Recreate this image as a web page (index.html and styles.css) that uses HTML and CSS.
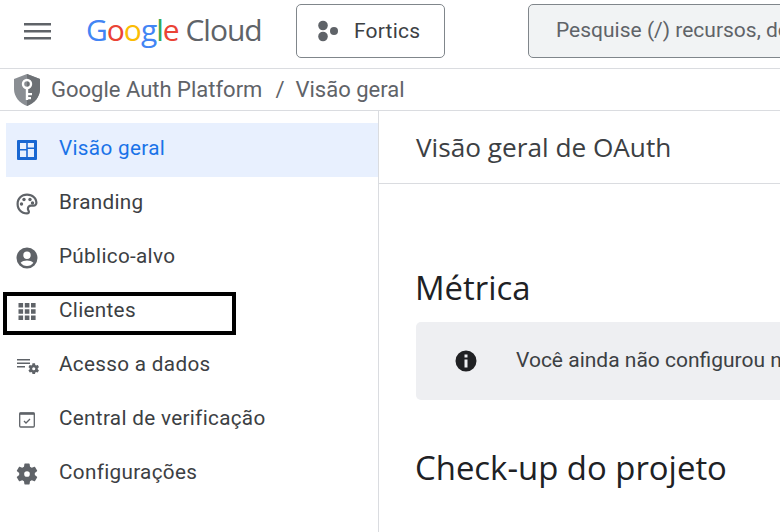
FILE: index.html
```html
<!DOCTYPE html>
<html lang="pt-BR">
<head>
    <meta charset="UTF-8">
    <meta name="viewport" content="width=device-width, initial-scale=1.0">
    <title>Google Auth Platform</title>
    <link rel="stylesheet" href="styles.css">
</head>
<body>
    <header class="topbar">
        <svg class="menu-icon" width="28" height="20" viewBox="0 0 28 20"><path d="M0 1h27v2.600H0zM0 8h27v2.600H0zM0 15h27v2.600H0z" fill="#5f6368"/></svg>
        <div class="logo"><span class="logo-google"><span class="c-blue">G</span><span class="c-red">o</span><span class="c-yellow">o</span><span class="c-blue">g</span><span class="c-green">l</span><span class="c-red">e</span></span> <span class="logo-cloud">Cloud</span></div>
        <button class="project-button">
            <svg width="22" height="24" viewBox="0 0 22 24"><circle cx="6" cy="6.500" r="4.800" fill="#5f6368"/><circle cx="6" cy="17.500" r="4.800" fill="#5f6368"/><circle cx="17" cy="12" r="4" fill="#5f6368"/></svg>
            Fortics
        </button>
        <div class="search-box">Pesquise (/) recursos, documentos</div>
    </header>

    <div class="breadcrumb">
        <svg class="shield" width="30" height="34" viewBox="0 0 30 34">
            <path d="M15 1L28 6v10c0 8-5.500 14-13 17C7.500 30 2 24 2 16V6z" fill="#8a8e93"/>
            <path d="M15 1L28 6v10c0 8-5.500 14-13 17z" fill="#6d7175"/>
            <circle cx="15" cy="11" r="4" fill="none" stroke="#fff" stroke-width="2.400"/>
            <path d="M13.800 14h2.400v13h-2.400zM16 20h4v2.200h-4zM16 24h3v2.200h-3z" fill="#fff"/>
        </svg>
        <span>Google Auth Platform</span>
        <span class="crumb-sep">/</span>
        <span>Visão geral</span>
    </div>

    <div class="layout">
        <nav class="sidebar">
            <a class="nav-item active">
                <svg width="24" height="24" viewBox="0 0 24 24"><path fill-rule="evenodd" d="M3 2h18a1 1 0 0 1 1 1v18a1 1 0 0 1-1 1H3a1 1 0 0 1-1-1V3a1 1 0 0 1 1-1zM5 5v6h6.200V5zm7.800 0v4.500H19V5zm0 6v8H19v-8zM5 12.600V19h6.200v-6.400z" fill="#1967d2"/></svg>
                Visão geral
            </a>
            <a class="nav-item">
                <svg width="24" height="24" viewBox="0 0 24 24"><path fill-rule="evenodd" d="M12 1.500C6 1.500 1.500 6 1.500 12S6 22.500 12 22.500c2 0 3-1.300 3-2.700 0-1.500-1-2-1-3.100 0-1.100.9-1.900 2-1.900h2.500c2.500 0 4-1.700 4-4C22.500 5.500 18 1.500 12 1.500zm0 2.200c4.800 0 8.300 3 8.300 7.100 0 1-.7 1.800-1.800 1.800H16c-2.400 0-4.200 1.800-4.200 4.100 0 1.500.9 2.400 1 3.200 0 .3-.3.4-.8.400-4.800 0-8.300-3.500-8.300-8.300S7.200 3.700 12 3.700z" fill="#5f6368"/><circle cx="6.500" cy="12" r="1.700" fill="#5f6368"/><circle cx="9" cy="7.500" r="1.700" fill="#5f6368"/><circle cx="15" cy="7.500" r="1.700" fill="#5f6368"/><circle cx="17.500" cy="11" r="1.700" fill="#5f6368"/></svg>
                Branding
            </a>
            <a class="nav-item">
                <svg width="24" height="24" viewBox="0 0 24 24"><path fill-rule="evenodd" d="M12 1.500a10.500 10.500 0 1 0 0 21 10.500 10.500 0 0 0 0-21zM12 5.500a3.700 3.700 0 1 1 0 7.400 3.700 3.700 0 0 1 0-7.400zM12 20c-2.700 0-5-1.300-6.400-3.300 1.500-1.500 4-2.300 6.400-2.300s4.900.8 6.400 2.300C17 18.700 14.700 20 12 20z" fill="#5f6368"/></svg>
                Público-alvo
            </a>
            <a class="nav-item">
                <svg width="24" height="24" viewBox="0 0 24 24"><path d="M3.500 3h4.600v4.600H3.500zM9.800 3h4.600v4.600H9.800zM16 3h4.600v4.600H16zM3.500 9.200h4.600v4.600H3.500zM9.800 9.200h4.600v4.600H9.800zM16 9.200h4.600v4.600H16zM3.500 15.400h4.600V20H3.500zM9.800 15.400h4.600V20H9.800zM16 15.400h4.600V20H16z" fill="#5f6368"/></svg>
                Clientes
            </a>
            <a class="nav-item">
                <svg width="24" height="24" viewBox="0 0 24 24"><path d="M2 5h13v1.500H2zM2 8.500h13v1.500H2zM2 12h8v1.500H2z" fill="#5f6368"/><g transform="translate(12 8) scale(.56)"><path d="M19.140 12.940c.04-.3.06-.61.06-.94 0-.32-.02-.64-.07-.94l2.030-1.580a.49.49 0 0 0 .12-.61l-1.920-3.320a.488.488 0 0 0-.59-.22l-2.390.96c-.5-.38-1.030-.7-1.620-.94l-.36-2.540a.484.484 0 0 0-.48-.41h-3.840c-.24 0-.43.17-.47.41l-.36 2.540c-.59.24-1.130.57-1.620.94l-2.390-.96c-.22-.08-.47 0-.59.22L2.740 8.870c-.12.21-.08.47.12.61l2.030 1.580c-.05.3-.09.63-.09.94s.02.64.07.94l-2.030 1.580a.49.49 0 0 0-.12.61l1.920 3.320c.12.22.37.29.59.22l2.390-.96c.5.38 1.030.7 1.620.94l.36 2.540c.05.24.24.41.48.41h3.840c.24 0 .44-.17.47-.41l.36-2.540c.59-.24 1.130-.56 1.620-.94l2.390.96c.22.08.47 0 .59-.22l1.920-3.320c.12-.22.07-.47-.12-.61l-2.010-1.580z" fill="#5f6368"/><circle cx="12" cy="12" r="2.800" fill="#fff"/></g></svg>
                Acesso a dados
            </a>
            <a class="nav-item">
                <svg width="24" height="24" viewBox="0 0 24 24"><rect x="4.700" y="5" width="14.600" height="14" rx="1" fill="none" stroke="#5f6368" stroke-width="1.300"/><path d="M4.500 4.500h15v2.300h-15z" fill="#5f6368"/><path d="M9 13l2 2 4-4" fill="none" stroke="#5f6368" stroke-width="1.300"/></svg>
                Central de verificação
            </a>
            <a class="nav-item">
                <svg width="24" height="24" viewBox="1 1 22 22"><path d="M19.140 12.940c.04-.3.06-.61.06-.94 0-.32-.02-.64-.07-.94l2.030-1.580a.49.49 0 0 0 .12-.61l-1.920-3.320a.488.488 0 0 0-.59-.22l-2.390.96c-.5-.38-1.030-.7-1.620-.94l-.36-2.540a.484.484 0 0 0-.48-.41h-3.840c-.24 0-.43.17-.47.41l-.36 2.540c-.59.24-1.130.57-1.620.94l-2.390-.96c-.22-.08-.47 0-.59.22L2.740 8.870c-.12.21-.08.47.12.61l2.030 1.580c-.05.3-.09.63-.09.94s.02.64.07.94l-2.030 1.580a.49.49 0 0 0-.12.61l1.920 3.320c.12.22.37.29.59.22l2.390-.96c.5.38 1.030.7 1.620.94l.36 2.540c.05.24.24.41.48.41h3.840c.24 0 .44-.17.47-.41l.36-2.540c.59-.24 1.130-.56 1.620-.94l2.390.96c.22.08.47 0 .59-.22l1.920-3.320c.12-.22.07-.47-.12-.61l-2.010-1.580z" fill="#5f6368"/><circle cx="12" cy="12" r="2.600" fill="#fff"/></svg>
                Configurações
            </a>
            <div class="highlight-box"></div>
        </nav>

        <main class="content">
            <div class="page-title">Visão geral de OAuth</div>
            <section class="page-body">
                <h2>Métrica</h2>
                <div class="notice">
                    <svg width="24" height="24" viewBox="0 0 24 24"><path fill-rule="evenodd" d="M12 1.500a10.500 10.500 0 1 0 0 21 10.500 10.500 0 0 0 0-21zM10.500 5.500h3v3h-3zM10.500 10.500h3v8h-3z" fill="#202124"/></svg>
                    <span>Você ainda não configurou nenhuma métrica</span>
                </div>
                <h2 class="second">Check-up do projeto</h2>
            </section>
        </main>
    </div>
</body>
</html>
```

FILE: styles.css
```css
* {
    margin: 0;
    padding: 0;
    box-sizing: border-box;
    font-family: Roboto, Arial, sans-serif;
}

body {
    width: 780px;
    height: 532px;
    overflow: hidden;
    background-color: #fff;
    color: #3c4043;
}

.topbar {
    height: 69px;
    display: flex;
    align-items: center;
    border-bottom: 1px solid #dadce0;
    padding-left: 24px;
    padding-bottom: 6px;
    white-space: nowrap;
}

.menu-icon {
    flex: none;
    margin-top: 1px;
}

.logo {
    margin-left: 34px;
    margin-bottom: 4px;
    width: 175px;
    flex: none;
    font-size: 30px;
    font-family: "Open Sans", sans-serif;
    letter-spacing: -1px;
}

.logo-google span {
    font-family: "Open Sans", sans-serif;
}

.logo-cloud {
    font-family: "Open Sans", sans-serif;
    color: #5f6368;
}

.c-blue { color: #4285f4; }
.c-red { color: #ea4335; }
.c-yellow { color: #fbbc04; }
.c-green { color: #34a853; }

.project-button {
    flex: none;
    width: 149px;
    height: 54px;
    margin-left: 35px;
    display: flex;
    align-items: center;
    gap: 15px;
    padding-left: 20px;
    font-size: 21px;
    letter-spacing: .2px;
    color: #3c4043;
    background: #fff;
    border: 1.500px solid #80868b;
    border-radius: 5px;
}

.search-box {
    flex: none;
    width: 400px;
    height: 54px;
    margin-left: 83px;
    padding-left: 27px;
    line-height: 50px;
    font-size: 21px;
    color: #5f6368;
    background: #f1f3f4;
    border: 1.500px solid #80868b;
    border-radius: 5px;
}

.breadcrumb {
    height: 42px;
    display: flex;
    align-items: center;
    border-bottom: 1px solid #dadce0;
    padding-left: 12px;
    font-size: 22px;
    color: #5f6368;
}

.shield {
    margin-right: 9px;
}

.crumb-sep {
    margin: 0 11px 0 13px;
}

.layout {
    display: flex;
    height: 421px;
}

.sidebar {
    position: relative;
    width: 379px;
    flex: none;
    padding: 12px 0 0 6px;
    border-right: 1.500px solid #dadce0;
}

.nav-item {
    height: 54px;
    display: flex;
    align-items: center;
    gap: 20px;
    padding-left: 9px;
    padding-bottom: 4px;
    font-size: 20.700px;
    letter-spacing: .32px;
    color: #3c4043;
}

.nav-item svg {
    flex: none;
    margin-top: 4px;
}

.nav-item.active {
    background-color: #e8f0fe;
    color: #1a73e8;
}

/* annotation drawn over the Clientes row */
.highlight-box {
    position: absolute;
    left: 3px;
    top: 181px;
    width: 233px;
    height: 43px;
    border: 4px solid #000;
}

.content {
    flex: 1;
    min-width: 0;
}

.page-title {
    height: 73px;
    padding: 18px 0 0 37px;
    font-size: 26.200px;
    border-bottom: 1px solid #dadce0;
    color: #3c4043;
    font-family: "Open Sans", sans-serif;
}

.page-body {
    padding: 84px 0 0 36px;
}

h2 {
    font-size: 32.900px;
    font-weight: 400;
    color: #202124;
    font-family: "Open Sans", sans-serif;
    line-height: 40px;
}

.notice {
    height: 78px;
    margin-top: 14px;
    margin-left: 1px;
    display: flex;
    align-items: center;
    gap: 38px;
    padding-left: 38px;
    font-size: 21px;
    white-space: nowrap;
    background-color: #eeeff2;
    border-radius: 5px 0 0 5px;
}

.notice svg {
    flex: none;
}

.notice span {
    margin-bottom: 2px;
}

h2.second {
    margin-top: 48px;
}
```
